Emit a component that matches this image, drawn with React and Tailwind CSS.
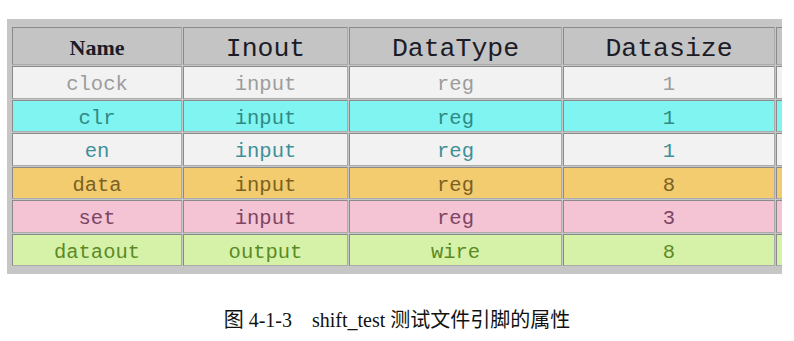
import React from "react";

const rows = [
  { cells: ["clock", "input", "reg", "1"], bg: "bg-[#f2f2f2]", fg: "text-[#9c9c9c]" },
  { cells: ["clr", "input", "reg", "1"], bg: "bg-[#7ff4f0]", fg: "text-[#2e8a84]" },
  { cells: ["en", "input", "reg", "1"], bg: "bg-[#f2f2f2]", fg: "text-[#3f8f9a]" },
  { cells: ["data", "input", "reg", "8"], bg: "bg-[#f2cc6f]", fg: "text-[#7a6122]" },
  { cells: ["set", "input", "reg", "3"], bg: "bg-[#f4c3d4]", fg: "text-[#7c4563]" },
  { cells: ["dataout", "output", "wire", "8"], bg: "bg-[#d6f2a9]", fg: "text-[#5b8a24]" },
];

const cellBase =
  "flex items-center justify-center border border-t-[#8a8a8a] border-l-[#8a8a8a] border-b-[#ababab] border-r-[#ababab] overflow-hidden whitespace-nowrap";

export default function App() {
  return (
    <div className="w-[794px] h-[341px] bg-white overflow-hidden">
      <div className="ml-[7px] mt-[19px] w-[775px] overflow-hidden bg-[#c6c6c6] pl-[5px] pt-[8px] pb-[8px]">
        <div className="grid w-[900px] grid-cols-[170px_165px_213px_212px_120px] grid-rows-[38px_repeat(6,32.5px)] gap-x-px gap-y-px">
          <div className={`${cellBase} pt-[3px] bg-[#c4c4c4] text-[#1c1c28] font-bold text-[22px] [font-family:'Liberation_Serif',serif]`}>
            Name
          </div>
          {["Inout", "DataType", "Datasize"].map((h) => (
            <div
              key={h}
              className={`${cellBase} pt-[8px] bg-[#c4c4c4] text-[#1c1c28] text-[26.5px] [font-family:'Liberation_Mono',monospace]`}
            >
              {h}
            </div>
          ))}
          <div className={`${cellBase} bg-[#c4c4c4]`}></div>
          {rows.map((r, i) => (
            <React.Fragment key={i}>
              {r.cells.map((c, j) => (
                <div
                  key={j}
                  className={`${cellBase} pt-[7px] ${r.bg} ${r.fg} text-[20.5px] [font-family:'Liberation_Mono',monospace]`}
                >
                  {c}
                </div>
              ))}
              <div className={`${cellBase} ${r.bg}`}></div>
            </React.Fragment>
          ))}
        </div>
      </div>
      <div className="mt-[36px] text-center text-[20px] leading-[20px] text-[#111] [font-family:'Liberation_Serif','Noto_Sans_CJK_SC',serif] whitespace-pre">
        <span>图 4-1-3</span>
        <span className="ml-[20px]">shift_test</span>
        <span> 测试文件引脚的属性</span>
      </div>
    </div>
  );
}
